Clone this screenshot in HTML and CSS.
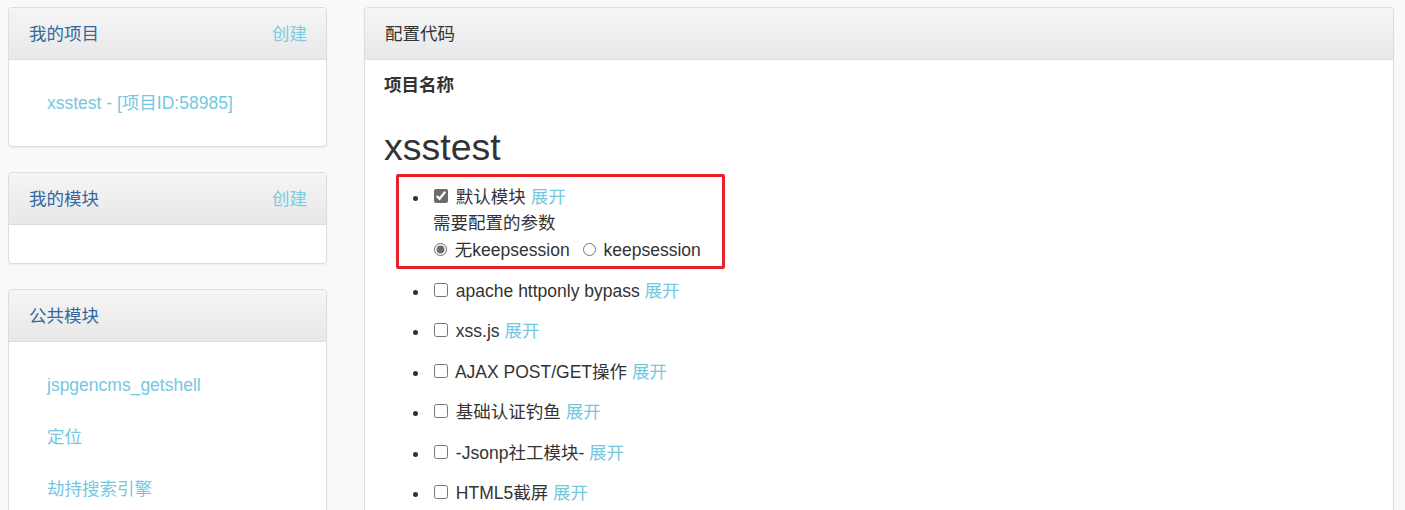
FILE: index.html
```html
<!DOCTYPE html>
<html lang="zh">
<head>
<meta charset="utf-8">
<title>配置代码</title>
<link rel="stylesheet" href="styles.css">
</head>
<body>
<div class="page">
  <aside class="sidebar">
    <section class="panel">
      <div class="panel-heading side-heading">
        <span class="side-title">我的项目</span>
        <a class="create" href="#">创建</a>
      </div>
      <ul class="side-list">
        <li><a href="#">xsstest - [项目ID:58985]</a></li>
      </ul>
    </section>
    <section class="panel">
      <div class="panel-heading side-heading">
        <span class="side-title">我的模块</span>
        <a class="create" href="#">创建</a>
      </div>
      <div class="empty-body"></div>
    </section>
    <section class="panel">
      <div class="panel-heading side-heading">
        <span class="side-title">公共模块</span>
      </div>
      <ul class="side-list">
        <li><a href="#">jspgencms_getshell</a></li>
        <li><a href="#">定位</a></li>
        <li><a href="#">劫持搜索引擎</a></li>
        <li><a href="#">更多</a></li>
      </ul>
    </section>
  </aside>
  <main class="panel main-panel">
    <div class="panel-heading main-heading">配置代码</div>
    <div class="main-body">
      <div class="label">项目名称</div>
      <h1 class="project-name">xsstest</h1>
      <div class="module-wrap">
        <div class="highlight"></div>
        <ul class="modules">
          <li class="module first">
            <div class="line"><input type="checkbox" checked> 默认模块 <a href="#">展开</a></div>
            <div class="params">需要配置的参数</div>
            <div class="radios">
              <label><input type="radio" name="ks" checked> 无keepsession</label>
              <label><input type="radio" name="ks"> keepsession</label>
            </div>
          </li>
          <li class="module"><input type="checkbox"> apache httponly bypass <a href="#">展开</a></li>
          <li class="module"><input type="checkbox"> xss.js <a href="#">展开</a></li>
          <li class="module"><input type="checkbox"> AJAX POST/GET操作 <a href="#">展开</a></li>
          <li class="module"><input type="checkbox"> 基础认证钓鱼 <a href="#">展开</a></li>
          <li class="module"><input type="checkbox"> -Jsonp社工模块- <a href="#">展开</a></li>
          <li class="module"><input type="checkbox"> HTML5截屏 <a href="#">展开</a></li>
          <li class="module"><input type="checkbox"> 获取内网IP <a href="#">展开</a></li>
        </ul>
      </div>
    </div>
  </main>
</div>
</body>
</html>
```
FILE: styles.css
```css
html, body {
  margin: 0;
  padding: 0;
  height: 510px;
  overflow: hidden;
}
body {
  background: #f9f9f9;
  font-family: "Liberation Sans", Arial, "Noto Sans CJK SC", sans-serif;
  font-size: 17.5px;
  color: #333;
}
a {
  color: #74c8df;
  text-decoration: none;
}
.page {
  display: flex;
  align-items: flex-start;
  padding: 7px 11px 0 8px;
  gap: 37px;
}
.sidebar {
  width: 319px;
  flex: none;
  display: flex;
  flex-direction: column;
  gap: 25px;
}
.panel {
  background: #fff;
  border: 1px solid #ddd;
  border-radius: 4px;
  box-shadow: 0 1px 2px rgba(0, 0, 0, 0.05);
  overflow: hidden;
}
.panel-heading {
  background: linear-gradient(to bottom, #f5f5f5 0%, #e8e8e8 100%);
  border-bottom: 1px solid #ddd;
  height: 52px;
  box-sizing: border-box;
  padding: 0 19px 0 20px;
  display: flex;
  align-items: center;
  line-height: 20px;
}
.side-heading {
  justify-content: space-between;
}
.side-title {
  color: #31699e;
}
.create {
  color: #7ccbe0;
}
.side-list {
  list-style: none;
  margin: 0;
  padding: 17px 0 17px 38px;
}
.side-list li {
  padding: 16px 0;
  line-height: 20px;
}
.empty-body {
  height: 38px;
}
.main-panel {
  flex: 1;
  min-width: 0;
  height: 560px;
}
.main-heading {
  color: #333;
}
.main-body {
  padding: 15px 20px 0 19px;
}
.label {
  font-weight: bold;
  line-height: 20px;
}
.project-name {
  font-size: 37.5px;
  font-weight: 500;
  line-height: 39.6px;
  margin: 33px 0 0;
  color: #333;
}
.module-wrap {
  position: relative;
  margin-top: 9px;
}
.highlight {
  position: absolute;
  left: 12px;
  top: -3px;
  width: 323px;
  height: 89px;
  border: 3px solid #e8202a;
  border-radius: 2px;
  pointer-events: none;
}
.modules {
  margin: 0;
  padding: 0 0 0 46px;
}
.module {
  padding: 10px 0;
  line-height: 20.4px;
}
.module.first {
  padding-bottom: 11px;
}
.module input[type="checkbox"] {
  margin: 0 3px 0 4px;
  width: 14px;
  height: 14px;
  vertical-align: 0;
  accent-color: #6b6b6b;
}
.params {
  margin-top: 6px;
  padding-left: 3px;
  line-height: 20px;
}
.radios {
  margin-top: 7px;
  line-height: 20px;
  display: flex;
  gap: 9px;
}
.radios input {
  margin: 0 3px 0 4px;
  width: 13px;
  height: 13px;
  vertical-align: 0;
  accent-color: #6b6b6b;
}
```
